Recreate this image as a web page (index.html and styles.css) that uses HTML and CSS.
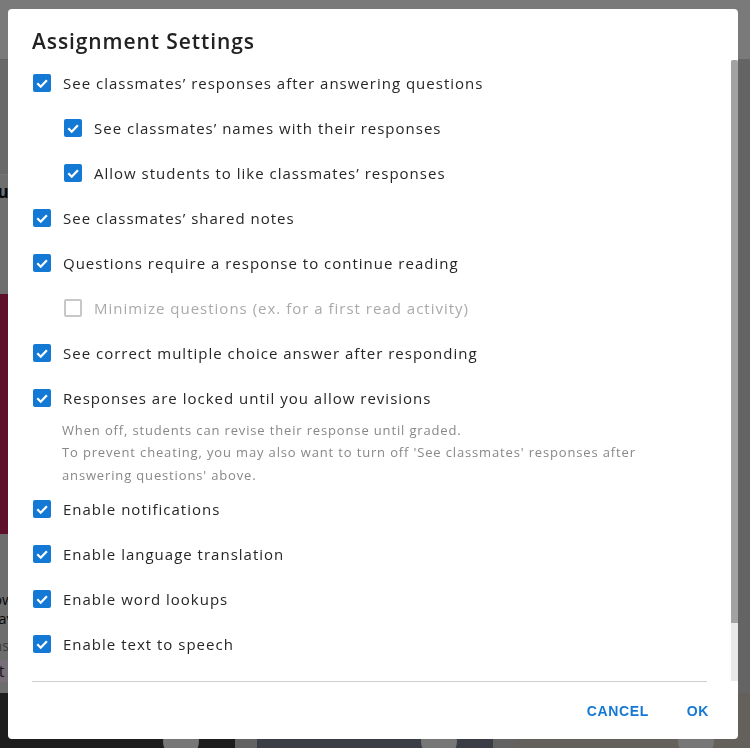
FILE: index.html
```html
<!DOCTYPE html>
<html lang="en">
<head>
    <meta charset="UTF-8">
    <meta name="viewport" content="width=device-width, initial-scale=1.0">
    <title>Assignment Settings</title>
    <link rel="stylesheet" href="styles.css">
</head>
<body>
    <!-- page behind the dialog -->
    <div class="page">
        <header class="topbar"></header>
        <div class="page-body">
            <aside class="side">
                <div class="side-head"></div>
                <div class="side-title">Quiz</div>
                <div class="side-cover"></div>
                <div class="side-info">
                    <p class="side-name">How we</p>
                    <p class="side-name">Leave</p>
                    <p class="side-meta">Class</p>
                    <span class="side-tag">Art</span>
                </div>
            </aside>
            <main class="feed"></main>
        </div>
        <div class="thumbs">
            <div class="thumb thumb-a"><span class="dot"></span></div>
            <div class="thumb thumb-b"><span class="dot"></span></div>
            <div class="thumb thumb-c"><span class="dot"></span></div>
        </div>
    </div>

    <div class="overlay">
        <div class="dialog">
            <h2 class="dialog-title">Assignment Settings</h2>

            <div class="dialog-body">
                <div class="dialog-content">
                    <label class="setting">
                        <span class="box checked"><svg viewBox="0 0 18 18"><path d="M4.3 9.3l3.4 3.4L13.9 6.2"/></svg></span>
                        See classmates’ responses after answering questions
                    </label>
                    <label class="setting sub">
                        <span class="box checked"><svg viewBox="0 0 18 18"><path d="M4.3 9.3l3.4 3.4L13.9 6.2"/></svg></span>
                        See classmates’ names with their responses
                    </label>
                    <label class="setting sub">
                        <span class="box checked"><svg viewBox="0 0 18 18"><path d="M4.3 9.3l3.4 3.4L13.9 6.2"/></svg></span>
                        Allow students to like classmates’ responses
                    </label>
                    <label class="setting">
                        <span class="box checked"><svg viewBox="0 0 18 18"><path d="M4.3 9.3l3.4 3.4L13.9 6.2"/></svg></span>
                        See classmates’ shared notes
                    </label>
                    <label class="setting">
                        <span class="box checked"><svg viewBox="0 0 18 18"><path d="M4.3 9.3l3.4 3.4L13.9 6.2"/></svg></span>
                        Questions require a response to continue reading
                    </label>
                    <label class="setting sub disabled">
                        <span class="box"></span>
                        Minimize questions (ex. for a first read activity)
                    </label>
                    <label class="setting">
                        <span class="box checked"><svg viewBox="0 0 18 18"><path d="M4.3 9.3l3.4 3.4L13.9 6.2"/></svg></span>
                        See correct multiple choice answer after responding
                    </label>
                    <label class="setting">
                        <span class="box checked"><svg viewBox="0 0 18 18"><path d="M4.3 9.3l3.4 3.4L13.9 6.2"/></svg></span>
                        Responses are locked until you allow revisions
                    </label>
                    <p class="helper">
                        When off, students can revise their response until graded.<br>
                        To prevent cheating, you may also want to turn off 'See classmates' responses after answering questions' above.
                    </p>
                    <label class="setting">
                        <span class="box checked"><svg viewBox="0 0 18 18"><path d="M4.3 9.3l3.4 3.4L13.9 6.2"/></svg></span>
                        Enable notifications
                    </label>
                    <label class="setting">
                        <span class="box checked"><svg viewBox="0 0 18 18"><path d="M4.3 9.3l3.4 3.4L13.9 6.2"/></svg></span>
                        Enable language translation
                    </label>
                    <label class="setting">
                        <span class="box checked"><svg viewBox="0 0 18 18"><path d="M4.3 9.3l3.4 3.4L13.9 6.2"/></svg></span>
                        Enable word lookups
                    </label>
                    <label class="setting">
                        <span class="box checked"><svg viewBox="0 0 18 18"><path d="M4.3 9.3l3.4 3.4L13.9 6.2"/></svg></span>
                        Enable text to speech
                    </label>
                </div>
                <!-- scrollbar: content runs on below the fold -->
                <div class="scrollbar"><div class="scroll-thumb"></div></div>
            </div>

            <div class="divider"></div>
            <div class="actions">
                <button class="btn">Cancel</button>
                <button class="btn">OK</button>
            </div>
        </div>
    </div>
</body>
</html>
```

FILE: styles.css
```css
body {
    margin: 0;
    font-family: 'Open Sans', 'Noto Sans', sans-serif;
    color: #333;
    overflow: hidden;
}

/* Page behind the dialog */
.page {
    height: 748px;
    display: flex;
    flex-direction: column;
    background: #c6c6c6;
}

.topbar {
    height: 59px;
    background: #f4f4f4;
}

.page-body {
    flex: 1;
    display: flex;
}

.side {
    width: 200px;
    display: flex;
    flex-direction: column;
    background: #d6d6d6;
}

.side-head {
    height: 114px;
    background: #d2d2d2;
    border-top: 1px solid #c4c4c4;
}

.side-title {
    height: 119px;
    font-size: 17px;
    font-weight: 700;
    line-height: 34px;
    color: #111;
    background: #dcdcdc;
    text-indent: -16px;
    border-top: 1px solid #e8e8e8;
}

.side-cover {
    height: 240px;
    background: #bd1e55;
}

.side-info {
    flex: 1;
    padding-top: 56px;
    background: #dadada;
    text-indent: -18px;
}

.side-name {
    margin: 0;
    font-size: 15px;
    line-height: 19px;
    color: #111;
}

.side-meta {
    margin: 8px 0 0;
    font-size: 14px;
    line-height: 19px;
    color: #777;
}

.side-tag {
    display: block;
    margin-top: 5px;
    height: 22px;
    background: #f1dcf1;
}

.feed {
    flex: 1;
    background: #c8c8c8;
}

.thumbs {
    height: 55px;
    display: flex;
    gap: 22px;
    background: #c4c4c4;
}

.thumb {
    flex: 1;
    position: relative;
}

.thumb-a { background: #3a3a3a; }
.thumb-b { background: #747a8a; }
.thumb-c { background: #c9c0b6; }

.dot {
    position: absolute;
    top: 30px;
    right: 36px;
    width: 36px;
    height: 36px;
    border-radius: 50%;
    background: #eee;
}

/* Dialog */
.overlay {
    position: fixed;
    inset: 0;
    display: flex;
    padding: 9px 12px 9px 8px;
    background: rgba(0, 0, 0, 0.5);
}

.dialog {
    flex: 1;
    display: flex;
    flex-direction: column;
    background: #fff;
    border-radius: 4px;
    overflow: hidden;
}

.dialog-title {
    margin: 0;
    padding: 20px 24px 7px;
    font-size: 21px;
    line-height: 24px;
    font-weight: 600;
    letter-spacing: 0.9px;
    color: #222;
}

.dialog-body {
    flex: 1;
    display: flex;
    min-height: 0;
}

.dialog-content {
    flex: 1;
    overflow: hidden;
    padding: 0 24px;
}

.scrollbar {
    width: 7px;
    background: #e9e9e9;
}

.scroll-thumb {
    height: 563px;
    background: #a2a2a2;
    border-radius: 2px 2px 0 0;
}

.setting {
    display: flex;
    align-items: center;
    gap: 12px;
    height: 45px;
    font-size: 15px;
    letter-spacing: 1px;
    color: #262626;
    cursor: pointer;
}

.setting.sub {
    padding-left: 31px;
}

.setting.disabled {
    color: #aaa;
}

.box {
    flex: none;
    width: 18px;
    height: 18px;
    margin-left: 1px;
    box-sizing: border-box;
    border: 2px solid #c7c7c7;
    border-radius: 2px;
    background: #fff;
}

.box.checked {
    border: none;
    background: #1479d4;
}

.box svg {
    display: block;
    width: 18px;
    height: 18px;
    fill: none;
    stroke: #fff;
    stroke-width: 2.3;
}

.helper {
    margin: -1.5px 0 0;
    padding-left: 30px;
    padding-right: 40px;
    font-size: 13px;
    line-height: 22.5px;
    letter-spacing: 0.85px;
    color: #888;
}

.divider {
    margin: 0 31px 0 24px;
    border-top: 1px solid #cfcfcf;
}

.actions {
    height: 57px;
    display: flex;
    align-items: center;
    justify-content: flex-end;
    gap: 16px;
    padding-right: 18px;
}

.btn {
    padding: 8px 11px;
    border: none;
    background: none;
    font-family: 'Liberation Sans', Arial, sans-serif;
    font-size: 14px;
    font-weight: 700;
    letter-spacing: 0.6px;
    text-transform: uppercase;
    color: #1479d4;
    cursor: pointer;
}
```
